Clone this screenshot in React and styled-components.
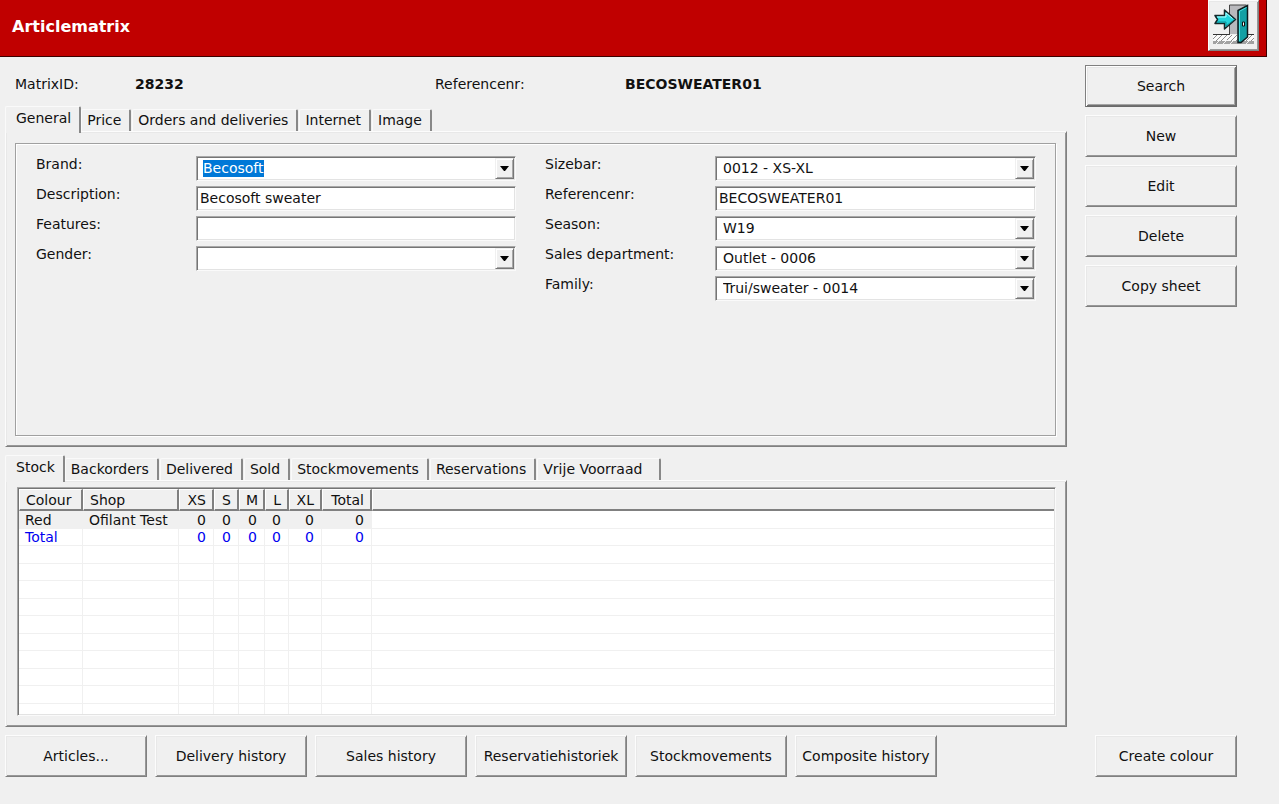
import React, { useEffect, useRef } from "react";
import styled, { createGlobalStyle, css } from "styled-components";

// ========== css: shared ==========
const GlobalStyle = createGlobalStyle`
  * {
    box-sizing: border-box;
  }
  body {
    margin: 0;
    background-color: #f0f0f0;
  }
  body, button, input, select {
    font-family: "DejaVu Sans", Verdana, sans-serif;
    font-size: 14px;
    color: #111;
  }
`;

const raised = css`
  border: 1px solid;
  border-color: #fcfcfc #808080 #808080 #fcfcfc;
  box-shadow: inset 1px 1px 0 #e8e8e8, inset -1px -1px 0 #989898;
`;

const sunken = css`
  border: 1px solid;
  border-color: #a8a8a8 #fafafa #fafafa #a8a8a8;
  box-shadow: inset 1px 1px 0 #757575, inset -1px -1px 0 #e3e3e3;
`;

// ========== css: header ==========
const Header = styled.header`
  height: 57px;
  margin-right: 12px;
  padding: 0 7px 0 12px;
  display: flex;
  justify-content: space-between;
  background-color: #c00000;
  border-right: 1px solid #3c0000;
  border-bottom: 1px solid #3c0000;
`;

const Title = styled.h1`
  margin: 0;
  font-size: 16px;
  line-height: 53px;
  font-weight: bold;
  color: white;
`;

const ExitButton = styled.button`
  ${raised}
  width: 51px;
  height: 51px;
  padding: 3px 0 0;
  display: flex;
  justify-content: center;
  background-color: #f0f0f0;
`;

// ========== css: page ==========
const Page = styled.div`
  padding: 8px 42px 0 5px;
  display: grid;
  grid-template-columns: 1fr 152px;
  column-gap: 18px;
`;

const Main = styled.main`
  min-width: 0;
`;

const InfoRow = styled.dl`
  margin: 0;
  height: 41px;
  padding: 0 10px;
  display: grid;
  grid-template-columns: 120px 300px 190px 1fr;
  line-height: 38px;
`;

const InfoValue = styled.dd`
  margin: 0;
  font-weight: bold;
`;

const Actions = styled.nav`
  display: flex;
  flex-direction: column;
  gap: 8px;
`;

const Button = styled.button`
  ${raised}
  width: ${(props) => props.$width || 152}px;
  height: 42px;
  padding: 0 0 1px;
  background-color: #f0f0f0;
  white-space: nowrap;
  ${(props) =>
    props.$primary &&
    css`
      border-color: #808080 #6a6a6a #6a6a6a #808080;
      box-shadow: inset 1px 1px 0 #fff, inset -1px -1px 0 #707070,
        inset 2px 2px 0 #e6e6e6, inset -2px -2px 0 #a4a4a4;
    `}
`;

const Footer = styled.footer`
  padding: 8px 42px 0 5px;
  display: flex;
  gap: 8px;

  ${Button}:last-child {
    margin-left: auto;
  }
`;

// ========== css: tabs ==========
const TabBar = styled.div`
  height: 25px;
  display: flex;
  align-items: flex-end;
`;

const Tab = styled.button`
  height: 22px;
  margin-right: 1px;
  padding: 0 8px 0 5px;
  background-color: #f0f0f0;
  border: 1px solid #fafafa;
  border-right: 2px solid #888;
  border-bottom: 0;
  border-radius: 2px 2px 0 0;
  line-height: 21px;
  white-space: nowrap;
  ${(props) =>
    props.$active &&
    css`
      height: 27px;
      margin: 0 0 -2px;
      padding: 0 8px 4px 10px;
    `}
`;

const TabPanel = styled.section`
  ${raised}
  height: ${(props) => props.$height}px;
  padding: ${(props) => props.$padding};
`;

const StockTabs = styled.div`
  padding-top: 8px;

  ${Tab}:last-child {
    padding-right: 17px;
  }
`;

// ========== css: form ==========
const Form = styled.form`
  height: 293px;
  padding: 12px 19px 12px 20px;
  border: 1px solid #a0a0a0;
  box-shadow: inset 1px 1px 0 #fff, 1px 1px 0 #fff;
  display: grid;
  grid-template-columns: calc(50% - 20px) 1fr;
  column-gap: 29px;
`;

const Column = styled.div`
  display: flex;
  flex-direction: column;
  gap: 5px;
`;

const Field = styled.div`
  height: 25px;
  display: grid;
  grid-template-columns: ${(props) => (props.$wide ? 170 : 160)}px 1fr;
`;

const Label = styled.label`
  line-height: 17px;
`;

const Box = styled.div`
  ${sunken}
  min-width: 0;
  padding: 1px;
  display: grid;
  background-color: white;

  > * {
    grid-area: 1 / 1;
  }
`;

const Input = styled.input`
  min-width: 0;
  width: 100%;
  padding: 0 2px;
  background: none;
  border: 0;
  outline: 0;
  line-height: 17px;

  &::selection {
    color: white;
    background-color: #0078d7;
  }
`;

const ComboInput = styled(Input)`
  padding: 0 5px;
`;

const Select = styled.select`
  appearance: none;
  min-width: 0;
  width: 100%;
  padding: 0 22px 2px 6px;
  background: none;
  border: 0;
  outline: 0;
`;

const Arrow = styled.span`
  justify-self: end;
  width: 19px;
  display: flex;
  align-items: center;
  justify-content: center;
  background-color: #f0f0f0;
  border: 1px solid;
  border-color: #f0f0f0 #777 #777 #f0f0f0;
  box-shadow: inset 1px 1px 0 #fff, inset -1px -1px 0 #a8a8a8;
  pointer-events: none;
`;

// ========== css: stock table ==========
const ListBox = styled.div`
  ${sunken}
  height: 229px;
  padding: 1px;
  background-color: white;
`;

const Viewport = styled.div`
  height: 100%;
  overflow: hidden;
`;

const Table = styled.table`
  width: 100%;
  table-layout: fixed;
  border-collapse: separate;
  border-spacing: 0;
`;

const Th = styled.th`
  height: 22px;
  padding: 0 6px;
  background-color: #f0f0f0;
  border-top: 1px solid #fff;
  border-right: 2px solid #808080;
  border-bottom: 2px solid #808080;
  border-left: 1px solid #fff;
  font-weight: normal;
  line-height: 18px;
  text-align: ${(props) => props.$align || "left"};

  &:last-child {
    border-right: 0;
  }
`;

const Td = styled.td`
  height: 18px;
  padding: 0 7px 0 6px;
  border-right: 1px solid #f0f0f0;
  border-bottom: 1px solid #f0f0f0;
  line-height: 16px;
  white-space: nowrap;
  text-align: ${(props) => props.$align || "left"};

  &:last-child {
    border-right: 0;
  }
`;

const Row = styled.tr`
  color: ${(props) => (props.$total ? "#0000f0" : "#111")};

  &:nth-child(even) ${Td} {
    height: 17px;
  }

  ${Td}:not(:last-child) {
    background-color: ${(props) => (props.$selected ? "#f0f0f0" : "white")};
  }
`;

// ========== data ==========
const columns = [
  { label: "Colour", width: 64 },
  { label: "Shop", width: 96 },
  { label: "XS", width: 35, align: "right" },
  { label: "S", width: 25, align: "right" },
  { label: "M", width: 26, align: "right" },
  { label: "L", width: 24, align: "right" },
  { label: "XL", width: 33, align: "right" },
  { label: "Total", width: 50, align: "right" },
];

const rows = [
  ["Red", "Ofilant Test", 0, 0, 0, 0, 0, 0],
  ["Total", "", 0, 0, 0, 0, 0, 0],
  ...Array.from({ length: 10 }, () => Array(8).fill("")),
];

// ========== components ==========
const ExitIcon = () => (
  <svg width="42" height="42" viewBox="0 0 42 42" aria-hidden="true">
    <defs>
      <pattern id="floor" width="5" height="5" patternUnits="userSpaceOnUse">
        <rect width="5" height="5" fill="#fafafa" />
        <path d="M0 5L5 0M-1 1L1 -1M4 6L6 4" stroke="#8c8c8c" strokeWidth="1" />
      </pattern>
    </defs>
    <path d="M0 31H41V37H0Z" fill="url(#floor)" />
    <path d="M0 37H41V40H0Z" fill="#a2a2a2" />
    <path d="M3 40L7 36M10 40L14 36M17 40L21 36M33 40L37 36" stroke="#f4f4f4" />
    <path d="M0 30.5H16M35 30.5H41" stroke="#333" strokeWidth="1" />
    <path d="M16 1H33V30H16Z" fill="#b9b9bd" />
    <path d="M16.5 31V1H33.5" fill="none" stroke="#444" strokeWidth="1" />
    <path d="M25 6.5L34.5 1.5V33L28 38.5H25Z" fill="#12a0a4" stroke="#0c1a1c" strokeWidth="1.5" />
    <path d="M26.5 7.5V37" stroke="#48dfe0" strokeWidth="1" />
    <path d="M26 7.5L33.5 3.5" stroke="#48dfe0" strokeWidth="1" />
    <path d="M29.5 18h2v4h-2z" fill="#fff" stroke="#111" />
    <path
      d="M2 11.5H11.5V6L22.5 15.5L11.5 25V19.5H2L4.5 15.5Z"
      fill="#22d4dc"
      stroke="#16282a"
      strokeWidth="1.5"
      strokeLinejoin="round"
    />
    <path d="M4 13H13V9L19.5 14.5" fill="none" stroke="#b5ffff" strokeWidth="1" />
    <path d="M4 18H13V22L19.5 17" fill="none" stroke="#0c8f96" strokeWidth="1" />
  </svg>
);

const ArrowMark = () => (
  <Arrow aria-hidden="true">
    <svg width="9" height="5" viewBox="0 0 9 5">
      <path d="M0 0H9L5 5H4Z" fill="#000" />
    </svg>
  </Arrow>
);

const TextField = ({ id, label, value, wide }) => (
  <Field $wide={wide}>
    <Label htmlFor={id}>{label}:</Label>
    <Box>
      <Input id={id} defaultValue={value} />
    </Box>
  </Field>
);

const SelectField = ({ id, label, value, wide }) => (
  <Field $wide={wide}>
    <Label htmlFor={id}>{label}:</Label>
    <Box>
      <Select id={id} defaultValue={value}>
        <option>{value}</option>
      </Select>
      <ArrowMark />
    </Box>
  </Field>
);

const BrandField = () => {
  const input = useRef(null);

  useEffect(() => {
    input.current.focus();
    input.current.select();
  }, []);

  return (
    <Field>
      <Label htmlFor="brand">Brand:</Label>
      <Box>
        <ComboInput id="brand" ref={input} defaultValue="Becosoft" />
        <ArrowMark />
      </Box>
    </Field>
  );
};

const Tabs = ({ labels }) => (
  <TabBar role="tablist">
    {labels.map((label, i) => (
      <Tab key={label} role="tab" aria-selected={i === 0} $active={i === 0}>
        {label}
      </Tab>
    ))}
  </TabBar>
);

const StockTable = () => (
  <Table>
    <colgroup>
      {columns.map((column) => (
        <col key={column.label} width={column.width} />
      ))}
      <col />
    </colgroup>
    <thead>
      <tr>
        {columns.map((column) => (
          <Th key={column.label} $align={column.align}>
            {column.label}
          </Th>
        ))}
        <Th />
      </tr>
    </thead>
    <tbody>
      {rows.map((cells, i) => (
        <Row key={i} $selected={i === 0} $total={i === 1}>
          {cells.map((cell, j) => (
            <Td key={j} $align={columns[j].align}>
              {cell}
            </Td>
          ))}
          <Td />
        </Row>
      ))}
    </tbody>
  </Table>
);

const App = () => {
  return (
    <>
      <GlobalStyle />
      <Header>
        <Title>Articlematrix</Title>
        <ExitButton aria-label="Exit">
          <ExitIcon />
        </ExitButton>
      </Header>

      <Page>
        {/* ========== left side ========== */}
        <Main>
          <InfoRow>
            <dt>MatrixID:</dt>
            <InfoValue>28232</InfoValue>
            <dt>Referencenr:</dt>
            <InfoValue>BECOSWEATER01</InfoValue>
          </InfoRow>

          <Tabs
            labels={["General", "Price", "Orders and deliveries", "Internet", "Image"]}
          />
          <TabPanel $height={316} $padding="11px 10px 0 9px">
            <Form>
              <Column>
                <BrandField />
                <TextField id="description" label="Description" value="Becosoft sweater" />
                <TextField id="features" label="Features" value="" />
                <SelectField id="gender" label="Gender" value="" />
              </Column>
              <Column>
                <SelectField id="sizebar" label="Sizebar" value="0012 - XS-XL" wide />
                <TextField id="reference" label="Referencenr" value="BECOSWEATER01" wide />
                <SelectField id="season" label="Season" value="W19" wide />
                <SelectField id="department" label="Sales department" value="Outlet - 0006" wide />
                <SelectField id="family" label="Family" value="Trui/sweater - 0014" wide />
              </Column>
            </Form>
          </TabPanel>

          <StockTabs>
            <Tabs
              labels={[
                "Stock",
                "Backorders",
                "Delivered",
                "Sold",
                "Stockmovements",
                "Reservations",
                "Vrije Voorraad",
              ]}
            />
          </StockTabs>
          <TabPanel $height={247} $padding="6px 10px 0 11px">
            <ListBox>
              <Viewport>
                <StockTable />
              </Viewport>
            </ListBox>
          </TabPanel>
        </Main>

        {/* ========== right side ========== */}
        <Actions>
          <Button $primary>Search</Button>
          <Button>New</Button>
          <Button>Edit</Button>
          <Button>Delete</Button>
          <Button>Copy sheet</Button>
        </Actions>
      </Page>

      {/* ========== bottom ========== */}
      <Footer>
        <Button $width={142}>Articles...</Button>
        <Button>Delivery history</Button>
        <Button>Sales history</Button>
        <Button>Reservatiehistoriek</Button>
        <Button>Stockmovements</Button>
        <Button $width={142}>Composite history</Button>
        <Button $width={142}>Create colour</Button>
      </Footer>
    </>
  );
};

export default App;
